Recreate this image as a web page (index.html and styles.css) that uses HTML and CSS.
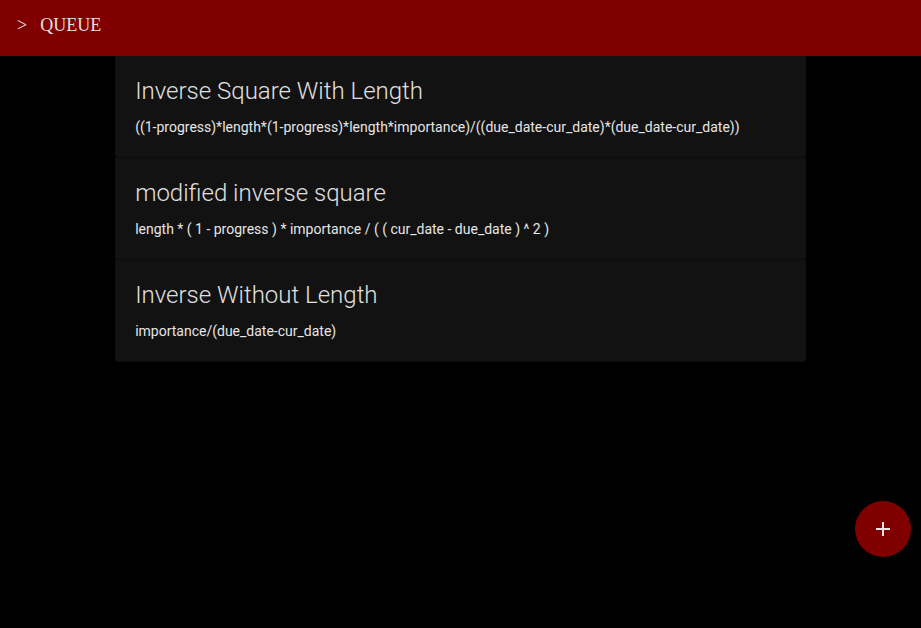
FILE: index.html
```html
<!DOCTYPE html>
<html>
<head>
<meta charset="utf-8">
<link rel="stylesheet" href="styles.css">
</head>
<body>
<header class="topbar">
  <span class="prompt">&gt;</span>
  <span class="title">QUEUE</span>
</header>
<main class="list">
  <section class="card">
    <h2 class="card-title">Inverse Square With Length</h2>
    <p class="card-formula">((1-progress)*length*(1-progress)*length*importance)/((due_date-cur_date)*(due_date-cur_date))</p>
  </section>
  <section class="card">
    <h2 class="card-title">modified inverse square</h2>
    <p class="card-formula">length * ( 1 - progress ) * importance / ( ( cur_date - due_date ) ^ 2 )</p>
  </section>
  <section class="card">
    <h2 class="card-title">Inverse Without Length</h2>
    <p class="card-formula">importance/(due_date-cur_date)</p>
  </section>
</main>
<button class="fab" aria-label="Add">
  <svg width="16" height="16" viewBox="0 0 16 16"><path d="M8 1v14M1 8h14" stroke="#e6e6e6" stroke-width="2" fill="none"/></svg>
</button>
</body>
</html>
```
FILE: styles.css
```css
html, body {
  margin: 0;
  padding: 0;
  background: #000;
  height: 100%;
}
body {
  font-family: Roboto, "Liberation Sans", sans-serif;
  color: #e6e6e6;
}
.topbar {
  height: 56px;
  background: #800000;
  display: flex;
  align-items: center;
  gap: 13px;
  padding: 0 0 6px 17px;
  font-family: "Liberation Serif", serif;
  font-size: 18px;
  color: #e0e0e0;
  box-sizing: border-box;
}
.list {
  width: 75%;
  margin: 0 auto;
  display: flex;
  flex-direction: column;
  gap: 1px;
}
.card {
  background: #121212;
  padding: 19px 20px 0;
  height: 101px;
  box-sizing: border-box;
  border-radius: 0 0 3px 3px;
  box-shadow: 0 1px 0 #0c0c0c;
}
.card-title {
  margin: 0;
  font-size: 24px;
  font-weight: 300;
  line-height: 32px;
  color: #e0e0e0;
}
.card-formula {
  margin: 10px 0 0;
  font-size: 14px;
  line-height: 20px;
  color: #e6e6e6;
}
.fab {
  position: fixed;
  right: 10px;
  bottom: 71px;
  width: 56px;
  height: 56px;
  border-radius: 50%;
  border: none;
  background: #800000;
  display: flex;
  align-items: center;
  justify-content: center;
  padding: 0;
}
```
